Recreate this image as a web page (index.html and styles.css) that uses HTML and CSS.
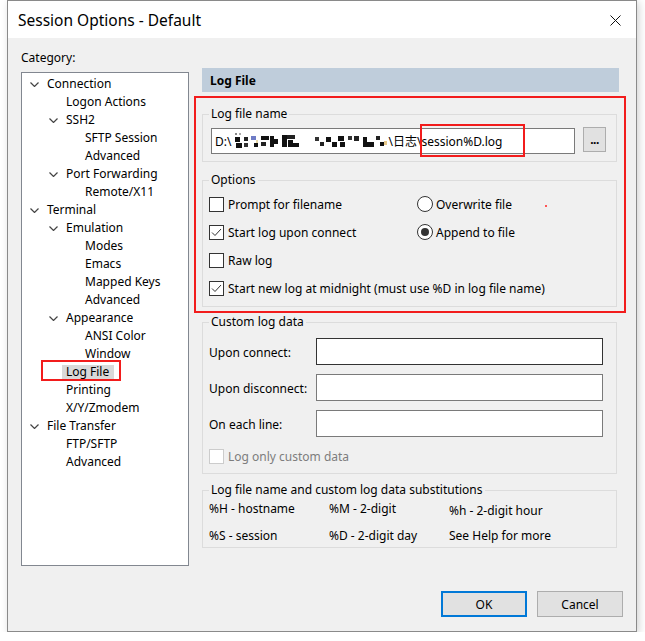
FILE: index.html
```html
<!DOCTYPE html>
<html>
<head>
<meta charset="utf-8">
<title>Session Options - Default</title>
<link rel="stylesheet" href="styles.css">
</head>
<body>
<div class="window">
  <div class="titlebar">
    <span class="title">Session Options - Default</span>
    <svg class="close" width="11" height="11" viewBox="0 0 11 11"><path d="M0.5 0.5 L10.5 10.5 M10.5 0.5 L0.5 10.5" stroke="#111" stroke-width="1" fill="none"/></svg>
  </div>
  <div class="content">
    <div class="left">
      <div class="cat-label">Category:</div>
      <div class="tree">
        <div class="node l0"><span class="chev"><svg width="9" height="5" viewBox="0 0 9 5"><polyline points="0.5,0.5 4.5,4.5 8.5,0.5" fill="none" stroke="#444" stroke-width="1.2"/></svg></span><span>Connection</span></div>
        <div class="node l1"><span class="chev"></span><span>Logon Actions</span></div>
        <div class="node l1"><span class="chev"><svg width="9" height="5" viewBox="0 0 9 5"><polyline points="0.5,0.5 4.5,4.5 8.5,0.5" fill="none" stroke="#444" stroke-width="1.2"/></svg></span><span>SSH2</span></div>
        <div class="node l2"><span class="chev"></span><span>SFTP Session</span></div>
        <div class="node l2"><span class="chev"></span><span>Advanced</span></div>
        <div class="node l1"><span class="chev"><svg width="9" height="5" viewBox="0 0 9 5"><polyline points="0.5,0.5 4.5,4.5 8.5,0.5" fill="none" stroke="#444" stroke-width="1.2"/></svg></span><span>Port Forwarding</span></div>
        <div class="node l2"><span class="chev"></span><span>Remote/X11</span></div>
        <div class="node l0"><span class="chev"><svg width="9" height="5" viewBox="0 0 9 5"><polyline points="0.5,0.5 4.5,4.5 8.5,0.5" fill="none" stroke="#444" stroke-width="1.2"/></svg></span><span>Terminal</span></div>
        <div class="node l1"><span class="chev"><svg width="9" height="5" viewBox="0 0 9 5"><polyline points="0.5,0.5 4.5,4.5 8.5,0.5" fill="none" stroke="#444" stroke-width="1.2"/></svg></span><span>Emulation</span></div>
        <div class="node l2"><span class="chev"></span><span>Modes</span></div>
        <div class="node l2"><span class="chev"></span><span>Emacs</span></div>
        <div class="node l2"><span class="chev"></span><span>Mapped Keys</span></div>
        <div class="node l2"><span class="chev"></span><span>Advanced</span></div>
        <div class="node l1"><span class="chev"><svg width="9" height="5" viewBox="0 0 9 5"><polyline points="0.5,0.5 4.5,4.5 8.5,0.5" fill="none" stroke="#444" stroke-width="1.2"/></svg></span><span>Appearance</span></div>
        <div class="node l2"><span class="chev"></span><span>ANSI Color</span></div>
        <div class="node l2"><span class="chev"></span><span>Window</span></div>
        <div class="node l1"><span class="chev"></span><span class="selected">Log File</span></div>
        <div class="node l1"><span class="chev"></span><span>Printing</span></div>
        <div class="node l1"><span class="chev"></span><span>X/Y/Zmodem</span></div>
        <div class="node l0"><span class="chev"><svg width="9" height="5" viewBox="0 0 9 5"><polyline points="0.5,0.5 4.5,4.5 8.5,0.5" fill="none" stroke="#444" stroke-width="1.2"/></svg></span><span>File Transfer</span></div>
        <div class="node l1"><span class="chev"></span><span>FTP/SFTP</span></div>
        <div class="node l1"><span class="chev"></span><span>Advanced</span></div>
        <div class="annot tree-mark"></div>
      </div>
    </div>
    <div class="right">
      <div class="header">Log File</div>
      <fieldset class="group g-name">
        <legend>Log file name</legend>
        <div class="name-row">
          <div class="textbox path"><span>D:\</span><svg class="mosaic" width="157" height="16" viewBox="0 0 157 16">
            <rect x="4" y="0" width="2" height="2" fill="#888"/><rect x="8" y="0" width="2" height="2" fill="#aaa"/>
            <rect x="4" y="4" width="5" height="5" fill="#111"/><rect x="5" y="10" width="6" height="5" fill="#111"/>
            <rect x="13" y="4" width="4" height="4" fill="#222"/><rect x="13" y="10" width="4" height="4" fill="#333"/>
            <rect x="20" y="3" width="5" height="4" fill="#6f7cc6"/><rect x="25" y="7" width="2" height="3" fill="#e8d9a8"/><rect x="23" y="10" width="4" height="4" fill="#111"/>
            <rect x="30" y="3" width="8" height="4" fill="#111"/><rect x="30" y="9" width="5" height="4" fill="#222"/>
            <rect x="39" y="3" width="4" height="11" fill="#111"/><rect x="43" y="6" width="4" height="5" fill="#111"/>
            <rect x="51" y="2" width="5" height="12" fill="#111"/><rect x="56" y="2" width="8" height="4" fill="#222"/>
            <rect x="57" y="7" width="5" height="7" fill="#111"/><rect x="62" y="10" width="6" height="4" fill="#111"/>
            <rect x="84" y="4" width="4" height="4" fill="#333"/><rect x="89" y="9" width="4" height="4" fill="#222"/>
            <rect x="95" y="4" width="5" height="5" fill="#111"/><rect x="101" y="9" width="5" height="5" fill="#111"/>
            <rect x="107" y="3" width="6" height="5" fill="#111"/><rect x="109" y="9" width="5" height="5" fill="#111"/>
            <rect x="117" y="3" width="4" height="4" fill="#333"/><rect x="123" y="3" width="5" height="5" fill="#222"/>
            <rect x="132" y="4" width="4" height="10" fill="#111"/><rect x="136" y="9" width="7" height="5" fill="#111"/>
            <rect x="145" y="3" width="4" height="4" fill="#222"/><rect x="149" y="9" width="4" height="4" fill="#111"/>
            <rect x="153" y="8" width="3" height="4" fill="#e8c98a"/>
          </svg><span>\日志\session%D.log</span></div>
          <div class="browse">...</div>
        </div>
      </fieldset>
      <fieldset class="group g-options">
        <legend>Options</legend>
        <div class="opt-grid">
          <div class="check"><span class="box"></span><span>Prompt for filename</span></div>
          <div class="radio"><span class="circle"></span><span>Overwrite file</span></div>
          <div class="check"><span class="box"><svg width="13" height="13" viewBox="0 0 13 13"><polyline points="2,6.5 5,9.5 11,3" fill="none" stroke="#333" stroke-width="1"/></svg></span><span>Start log upon connect</span></div>
          <div class="radio"><span class="circle on"></span><span>Append to file</span></div>
          <div class="check"><span class="box"></span><span>Raw log</span></div>
          <div></div>
          <div class="check wide"><span class="box"><svg width="13" height="13" viewBox="0 0 13 13"><polyline points="2,6.5 5,9.5 11,3" fill="none" stroke="#333" stroke-width="1"/></svg></span><span>Start new log at midnight (must use %D in log file name)</span></div>
        </div>
      </fieldset>
      <fieldset class="group g-custom">
        <legend>Custom log data</legend>
        <div class="custom-grid">
          <span>Upon connect:</span><div class="textbox focus"></div>
          <span>Upon disconnect:</span><div class="textbox"></div>
          <span>On each line:</span><div class="textbox"></div>
        </div>
        <div class="check disabled"><span class="box"></span><span>Log only custom data</span></div>
      </fieldset>
      <fieldset class="group g-subs">
        <legend>Log file name and custom log data substitutions</legend>
        <div class="subs-grid">
          <span>%H - hostname</span><span>%M - 2-digit</span><span class="low">%h - 2-digit hour</span>
          <span>%S - session</span><span>%D - 2-digit day</span><span>See Help for more</span>
        </div>
      </fieldset>
      <div class="annot big-mark"></div>
      <div class="annot small-mark"></div>
      <div class="dot"></div>
    </div>
  </div>
  <div class="footer">
    <div class="btn default">OK</div>
    <div class="btn">Cancel</div>
  </div>
</div>
</body>
</html>
```

FILE: styles.css
```css
html, body {
  margin: 0;
  background: #fff;
}
body {
  font-family: "Noto Sans", "Noto Sans CJK SC", sans-serif;
  font-size: 12px;
  line-height: 16px;
  color: #000;
}
.window {
  margin-left: 7px;
  width: 630px;
  height: 632px;
  box-sizing: border-box;
  border: 1px solid #8a8a8a;
  background: #f0f0f0;
  display: flex;
  flex-direction: column;
  box-shadow: 2px 2px 8px rgba(0, 0, 0, 0.18);
}
.titlebar {
  height: 37px;
  box-sizing: border-box;
  flex: none;
  background: #fff;
  display: flex;
  align-items: center;
  justify-content: space-between;
  padding: 1px 15px 0 10px;
}
.title {
  font-size: 15.5px;
  line-height: 20px;
}
.close {
  display: block;
}
.content {
  display: flex;
  align-items: flex-start;
  padding-left: 13px;
}
.left {
  width: 168px;
  flex: none;
}
.cat-label {
  margin-top: 12px;
}
.tree {
  margin-top: 6px;
  width: 168px;
  height: 494px;
  box-sizing: border-box;
  border: 1px solid #828790;
  background: #fff;
  padding-top: 1px;
  position: relative;
}
.node {
  height: 18px;
  box-sizing: border-box;
  padding-top: 2px;
  display: flex;
  align-items: center;
  white-space: nowrap;
}
.node.l0 { padding-left: 8px; }
.node.l1 { padding-left: 27px; }
.node.l2 { padding-left: 46px; }
.chev {
  width: 17px;
  flex: none;
  display: flex;
  align-items: center;
  padding-top: 1px;
}
.chev svg { display: block; }
.selected {
  background: #d9d9d9;
  padding: 0 5px 0 4px;
  margin-left: -4px;
  line-height: 14px;
  height: 14px;
}
.annot {
  position: absolute;
  box-sizing: border-box;
  border: 2px solid #f21c1c;
}
.tree-mark {
  left: 19px;
  top: 287px;
  width: 80px;
  height: 21px;
}
.right {
  margin-left: 13px;
  width: 417px;
  flex: none;
  padding-top: 30px;
  position: relative;
}
.header {
  height: 24px;
  box-sizing: border-box;
  padding-top: 2px;
  background: #bfcddb;
  font-weight: bold;
  padding-left: 8px;
  display: flex;
  align-items: center;
}
.group {
  width: 415px;
  min-width: 0;
  box-sizing: border-box;
  margin: 0;
  border: 1px solid #dcdcdc;
  padding: 0 6px;
}
.group legend {
  padding: 0 2px;
  line-height: 16px;
}
.g-name {
  margin-top: 14px;
  padding-top: 5px;
  padding-bottom: 7px;
}
.name-row {
  display: flex;
  align-items: flex-start;
  gap: 8px;
  padding-left: 2px;
}
.textbox {
  box-sizing: border-box;
  border: 1px solid #7a7a7a;
  background: #fff;
}
.textbox.focus {
  border-color: #333;
}
.path {
  width: 364px;
  height: 26px;
  margin-top: 1px;
  display: flex;
  align-items: center;
  padding-left: 3px;
  padding-top: 2px;
  white-space: nowrap;
}
.mosaic {
  display: block;
  flex: none;
  margin-top: -2px;
}
.browse {
  width: 23px;
  height: 25px;
  box-sizing: border-box;
  border: 1px solid #adadad;
  background: #e1e1e1;
  text-align: center;
  line-height: 23px;
  font-weight: bold;
  letter-spacing: -0.5px;
}
.g-options {
  margin-top: 10px;
  padding-top: 2px;
  padding-bottom: 4px;
}
.opt-grid {
  display: grid;
  grid-template-columns: 208px 1fr;
  grid-auto-rows: 28px;
  align-items: center;
}
.wide {
  grid-column: 1 / 3;
}
.check {
  display: flex;
  align-items: center;
  gap: 4px;
  white-space: nowrap;
}
.check > span:last-child,
.radio > span:last-child {
  padding-top: 2px;
}
.box {
  width: 15px;
  height: 15px;
  box-sizing: border-box;
  border: 1px solid #333;
  background: #fff;
  flex: none;
}
.box svg { display: block; }
.radio {
  display: flex;
  align-items: center;
  gap: 3px;
}
.circle {
  width: 16px;
  height: 16px;
  box-sizing: border-box;
  border: 1px solid #333;
  border-radius: 50%;
  background: #fff;
  flex: none;
  display: flex;
  align-items: center;
  justify-content: center;
}
.circle.on::after {
  content: "";
  width: 8px;
  height: 8px;
  border-radius: 50%;
  background: #333;
}
.g-custom {
  margin-top: 7px;
  padding-top: 8px;
  padding-bottom: 3px;
}
.custom-grid {
  display: grid;
  grid-template-columns: 107px 287px;
  grid-auto-rows: 27px;
  row-gap: 9px;
  align-items: center;
}
.custom-grid > span {
  padding-top: 2px;
}
.custom-grid .textbox {
  height: 27px;
}
.disabled {
  margin-top: 5px;
  height: 28px;
  color: #7d7d7d;
}
.disabled .box {
  border-color: #cccccc;
}
.g-subs {
  margin-top: 8px;
  padding-top: 1px;
  padding-bottom: 3px;
}
.subs-grid {
  display: grid;
  grid-template-columns: 120px 120px 1fr;
  grid-auto-rows: 18px;
  row-gap: 9px;
  align-items: center;
}
.subs-grid > span {
  padding-top: 2px;
}
.subs-grid > .low {
  padding-top: 5px;
}
.big-mark {
  left: -8px;
  top: 58px;
  width: 432px;
  height: 217px;
}
.small-mark {
  left: 218px;
  top: 86px;
  width: 105px;
  height: 33px;
}
.dot {
  position: absolute;
  left: 343px;
  top: 167px;
  width: 2px;
  height: 2px;
  background: #f55;
}
.footer {
  margin-top: auto;
  display: flex;
  justify-content: flex-end;
  gap: 10px;
  padding: 0 13px 14px 0;
}
.btn {
  width: 86px;
  height: 26px;
  box-sizing: border-box;
  border: 1px solid #adadad;
  background: #e1e1e1;
  display: flex;
  align-items: center;
  justify-content: center;
  padding-top: 2px;
}
.btn.default {
  border: 2px solid #0078d7;
}
```
